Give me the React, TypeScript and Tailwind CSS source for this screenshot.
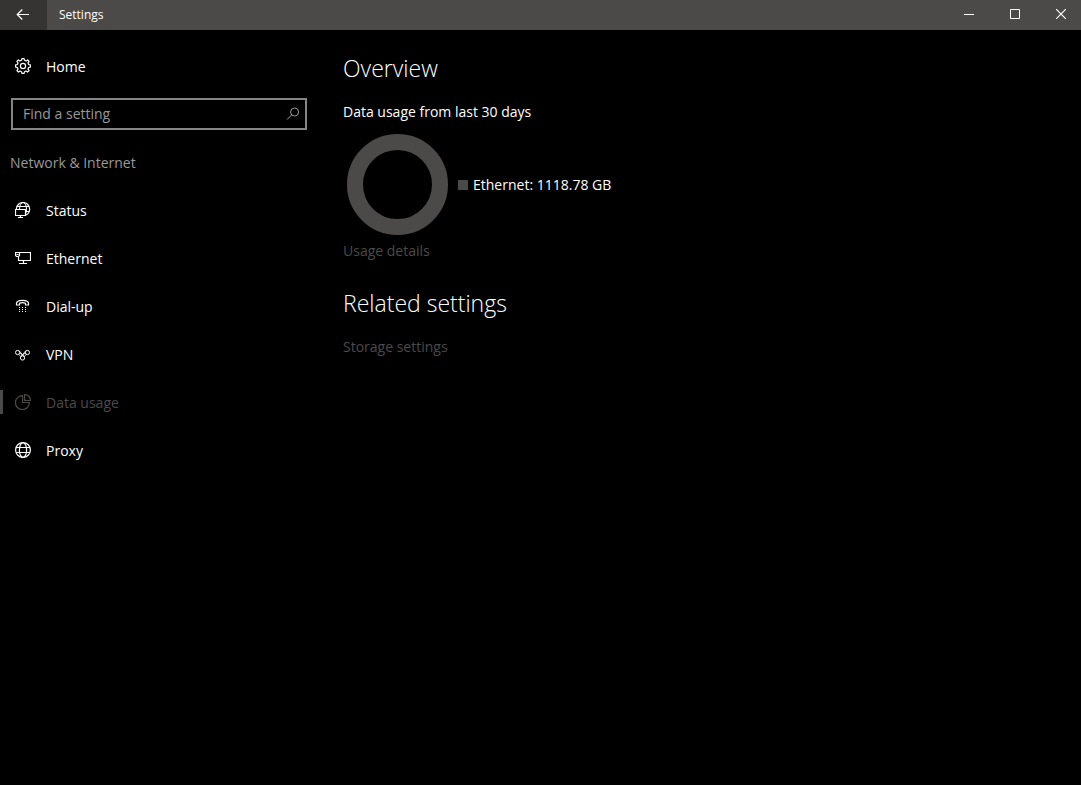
import React, { useState } from "react";

const iconProps = {
  width: 16,
  height: 16,
  viewBox: "0 0 16 16",
  fill: "none",
  stroke: "currentColor",
  "aria-hidden": true,
  className: "shrink-0",
};

const GearIcon = () => (
  <svg {...iconProps} strokeWidth="1.2" strokeLinejoin="round">
    <path d="M6.5 2.3 L6.9 .6 H9.1 L9.5 2.3 L11.1 3 L12.6 1.9 L14.1 3.4 L13 4.9 L13.7 6.5 L15.4 6.9 V9.1 L13.7 9.5 L13 11.1 L14.1 12.6 L12.6 14.1 L11.1 13 L9.5 13.7 L9.1 15.4 H6.9 L6.5 13.7 L4.9 13 L3.4 14.1 L1.9 12.6 L3 11.1 L2.3 9.5 L.6 9.1 V6.9 L2.3 6.5 L3 4.9 L1.9 3.4 L3.4 1.9 L4.9 3 Z" />
    <circle cx="8" cy="8" r="2.6" />
  </svg>
);

const StatusIcon = () => (
  <svg {...iconProps}>
    <circle cx="8" cy="7.2" r="6.7" strokeWidth="1.2" />
    <ellipse cx="8" cy="7.2" rx="3.5" ry="6.7" />
    <path d="M1.8 4.5 H14.2 M1.8 9.5 H14.2" />
    {/* monitor in front of the globe */}
    <path d="M0 7 H11 V16 H0 Z" className="fill-black" stroke="none" />
    <path d="M.5 7.5 H10.5 V13.5 H.5 Z M5.5 13.5 V15.5 M3 15.5 H8" strokeWidth="1.2" />
  </svg>
);

const EthernetIcon = () => (
  <svg {...iconProps} strokeWidth="1.2">
    <path d="M5 2.5 H15.5 V10.5 H3.5 V7" />
    <path d="M8.5 10.5 V13.5 M4 13.5 H12" />
    <path d="M.5 2.5 H4.5 V5.5 L3.5 6.5 H1.5 L.5 5.5 Z M1.5 4.5 H3.5" />
  </svg>
);

const DialUpIcon = () => (
  <svg {...iconProps}>
    <path
      d="M1.5 7 V5 C2.6 1.6 12.4 1.6 13.5 5 V7 H10.5 V5.2 C9 4.6 6 4.6 4.5 5.2 V7 Z"
      strokeWidth="1.2"
      strokeLinejoin="round"
    />
    <path d="M4 9.5 H5 M7 9.5 H8 M10 9.5 H11 M4 11.5 H5 M7 11.5 H8 M10 11.5 H11 M4 13.5 H5 M7 13.5 H8 M10 13.5 H11" />
  </svg>
);

const VpnIcon = () => (
  <svg {...iconProps}>
    <circle cx="2.6" cy="6.5" r="2.1" />
    <circle cx="12.4" cy="6.5" r="2.1" />
    <circle cx="7.5" cy="12" r="2.1" />
    <path d="M4 4.6 L9 10.4 M11 4.6 L6 10.4 M3.8 8.3 L5.8 10.8 M11.2 8.3 L9.2 10.8 M4.7 6.5 L7.5 9.8 L10.3 6.5" strokeWidth=".8" />
  </svg>
);

const DataUsageIcon = () => (
  <svg {...iconProps} strokeWidth="1.2">
    <path d="M7.5 1.6 A7 7 0 1 0 14.4 8.5 H7.5 Z" />
    <path d="M9.5 .5 A6 6 0 0 1 15.5 6.5 H9.5 Z" />
  </svg>
);

const GlobeIcon = () => (
  <svg {...iconProps} strokeWidth="1.2">
    <circle cx="8" cy="8" r="7.4" />
    <ellipse cx="8" cy="8" rx="3.6" ry="7.4" />
    <path d="M1.4 5.5 H14.6 M1.4 10.5 H14.6" />
  </svg>
);

const SearchIcon = () => (
  <svg width="14" height="14" viewBox="0 0 14 14" fill="none" stroke="currentColor" aria-hidden="true">
    <circle cx="8.6" cy="5" r="4" />
    <path d="M5.8 7.8 L1 12.6" />
  </svg>
);

const navItems = [
  { name: "Status", icon: StatusIcon },
  { name: "Ethernet", icon: EthernetIcon },
  { name: "Dial-up", icon: DialUpIcon },
  { name: "VPN", icon: VpnIcon },
  { name: "Data usage", icon: DataUsageIcon },
  { name: "Proxy", icon: GlobeIcon },
];

const TitleBar = () => (
  <header className="flex h-[30px] items-stretch bg-[#4c4a48]">
    <button aria-label="Back" className="flex w-[47px] items-center justify-center bg-[#353432] pr-px pb-0.5">
      <svg width="14" height="12" viewBox="0 0 14 12" fill="none" stroke="currentColor" strokeWidth="1.2" aria-hidden="true">
        <path d="M13 6.5 H1.2 M6.3 1.5 L1.2 6.5 L6.3 11.5" />
      </svg>
    </button>
    <span className="flex flex-1 items-center pl-3 text-xs">Settings</span>
    <button aria-label="Minimize" className="flex w-[46px] items-center justify-center pl-1.5">
      <svg width="10" height="10" viewBox="0 0 10 10" stroke="currentColor" aria-hidden="true">
        <path d="M0 4.5 H10" />
      </svg>
    </button>
    <button aria-label="Maximize" className="flex w-[46px] items-center justify-center pb-0.5 pl-1.5">
      <svg width="10" height="10" viewBox="0 0 10 10" fill="none" stroke="currentColor" aria-hidden="true">
        <path d="M.5 .5 H9.5 V9.5 H.5 Z" />
      </svg>
    </button>
    <button aria-label="Close" className="flex w-[46px] items-center justify-center pb-0.5 pl-1.5">
      <svg width="10" height="10" viewBox="0 0 10 10" stroke="currentColor" strokeWidth="1.2" aria-hidden="true">
        <path d="M0 0 L10 10 M10 0 L0 10" />
      </svg>
    </button>
  </header>
);

const App = () => {
  const [active, setActive] = useState("Data usage");
  const [query, setQuery] = useState("");

  return (
    <div className="flex min-h-screen flex-col bg-black font-['Open_Sans',sans-serif] text-sm text-white">
      <TitleBar />
      <div className="flex flex-1">
        <aside className="w-80 shrink-0 pt-3">
          <a href="#home" className="flex h-12 items-center gap-[15px] pl-[15px]">
            <GearIcon />
            <span className="pt-0.5">Home</span>
          </a>

          <div className="mt-2 mr-[13px] ml-[11px] flex h-8 items-center border-2 border-[#858585] text-[#999999]">
            <input
              type="text"
              aria-label="Find a setting"
              placeholder="Find a setting"
              value={query}
              onChange={(e) => setQuery(e.target.value)}
              className="min-w-0 flex-1 bg-transparent pl-2.5 outline-none placeholder:text-[#999999]"
            />
            <button aria-label="Search" className="px-[5px]">
              <SearchIcon />
            </button>
          </div>

          <h2 className="mt-2 flex h-12 items-center pt-0.5 pl-2.5 text-[#999999]">Network &amp; Internet</h2>

          <nav>
            {navItems.map(({ name, icon: Icon }) => (
              <a
                key={name}
                href="#"
                onClick={() => setActive(name)}
                className={
                  name === active
                    ? "flex h-12 items-center text-[#4c4a48]"
                    : "flex h-12 items-center"
                }
              >
                <span className={name === active ? "h-6 w-[3px] bg-[#4c4a48]" : "h-6 w-[3px]"} />
                <span className="flex items-center gap-[15px] pl-3">
                  <Icon />
                  <span className="pt-0.5">{name}</span>
                </span>
              </a>
            ))}
          </nav>
        </aside>

        <main className="flex-1 pt-[22px] pl-[23px]">
          <h1 className="text-[23px] leading-8 font-[350]">Overview</h1>
          <p className="mt-4 leading-6">Data usage from last 30 days</p>
          <div className="mt-2.5 ml-1 flex items-center gap-2.5">
            <svg width="101" height="101" viewBox="0 0 101 101" fill="none" role="img" aria-label="Data usage chart">
              <circle cx="50.5" cy="50.5" r="42.5" stroke="#4c4a48" strokeWidth="16" />
            </svg>
            <div className="flex items-center gap-[5px]">
              <span className="size-2.5 bg-[#4c4a48]" />
              Ethernet: 1118.78 GB
            </div>
          </div>
          <a href="#details" className="mt-1 block leading-6 text-[#4c4a48]">
            Usage details
          </a>

          <h2 className="mt-6 text-[23px] leading-8 font-[350]">Related settings</h2>
          <a href="#storage" className="mt-4 block leading-6 text-[#4c4a48]">
            Storage settings
          </a>
        </main>
      </div>
    </div>
  );
};

export default App;
